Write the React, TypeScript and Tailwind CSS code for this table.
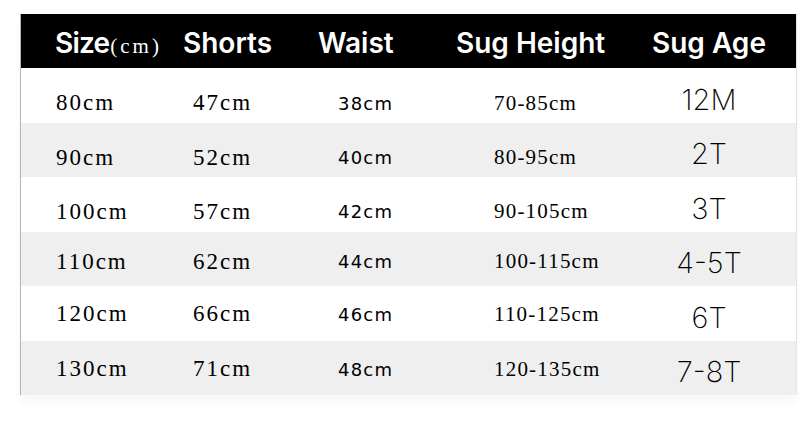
import React from "react";

type Row = {
  size: string;
  shorts: string;
  waist: string;
  height: string;
  age: string;
  bg: string;
  shift: string;
};

const rows: Row[] = [
  { size: "80cm", shorts: "47cm", waist: "38cm", height: "70-85cm", age: "12M", bg: "bg-white", shift: "pt-[16px]" },
  { size: "90cm", shorts: "52cm", waist: "40cm", height: "80-95cm", age: "2T", bg: "bg-[#efefef]", shift: "pt-[16px]" },
  { size: "100cm", shorts: "57cm", waist: "42cm", height: "90-105cm", age: "3T", bg: "bg-white", shift: "pt-[15px]" },
  { size: "110cm", shorts: "62cm", waist: "44cm", height: "100-115cm", age: "4-5T", bg: "bg-[#efefef]", shift: "pt-[6px]" },
  { size: "120cm", shorts: "66cm", waist: "46cm", height: "110-125cm", age: "6T", bg: "bg-white", shift: "pt-[2px]" },
  { size: "130cm", shorts: "71cm", waist: "48cm", height: "120-135cm", age: "7-8T", bg: "bg-[#efefef]", shift: "pt-[3px]" },
];

const grid = "grid grid-cols-[155px_135px_130px_190px_167px]";
const serif = "font-['Liberation_Serif',serif]";

export default function App() {
  return (
    <div className="w-[800px] h-[425px] bg-white overflow-hidden pt-[14px] pl-[20px]">
      <div className="w-[777px] border-l border-[#b5b5b5] border-r border-r-[#e4e4e4] shadow-[0_8px_10px_rgba(0,0,0,0.03)]">
        <div
          className={`${grid} h-[54px] items-center bg-black text-white font-['Inter',sans-serif] font-semibold text-[28px] pt-[3px]`}
        >
          <div className="pl-[34px] flex items-baseline">
            <span className="tracking-[-0.8px]">Size</span>
            <span className={`${serif} font-normal text-[21px] tracking-[3px] pl-[1px]`}>(cm)</span>
          </div>
          <div className="pl-[7px]">Shorts</div>
          <div className="pl-[7px]">Waist</div>
          <div className="pl-[15px]">Sug Height</div>
          <div className="pl-[21px]">Sug Age</div>
        </div>
        {rows.map((r) => (
          <div key={r.size} className={`${grid} h-[54.5px] items-center ${r.bg} text-black`}>
            <div className={`pl-[35px] ${r.shift} ${serif} text-[23px] tracking-[2px]`}>{r.size}</div>
            <div className={`pl-[17px] ${r.shift} ${serif} text-[23px] tracking-[2px]`}>{r.shorts}</div>
            <div className={`pl-[27px] ${r.shift} font-['DejaVu_Sans',sans-serif] text-[18px] tracking-[1.2px]`}>
              {r.waist}
            </div>
            <div className={`pl-[53px] ${r.shift} ${serif} text-[21px] tracking-[1.2px]`}>{r.height}</div>
            <div className="pr-[11px] pt-[8px] text-center font-['Inter',sans-serif] font-extralight text-[29px]">
              {r.age}
            </div>
          </div>
        ))}
      </div>
    </div>
  );
}
